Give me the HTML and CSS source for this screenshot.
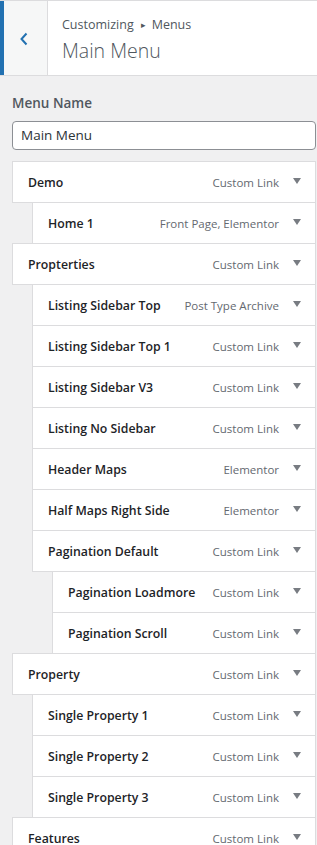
FILE: index.html
```html
<!DOCTYPE html>
<html>
<head>
<meta charset="utf-8">
<link rel="stylesheet" href="styles.css">
</head>
<body>
<div class="header">
  <div class="back"><svg width="10" height="14" viewBox="0 0 10 14"><path d="M7.5 1.5 L2.5 7 L7.5 12.5" fill="none" stroke="#2271b1" stroke-width="2"/></svg></div>
  <div class="titles">
    <div class="crumb">Customizing<span class="sep">▸</span>Menus</div>
    <div class="title">Main Menu</div>
  </div>
</div>
<div class="content">
  <div class="label">Menu Name</div>
  <div class="input">Main Menu</div>
  <ul class="menu">
    <li class="item"><span class="name">Demo</span><span class="type">Custom Link</span><span class="toggle"></span></li>
    <li class="item d1"><span class="name">Home 1</span><span class="type">Front Page, Elementor</span><span class="toggle"></span></li>
    <li class="item"><span class="name">Propterties</span><span class="type">Custom Link</span><span class="toggle"></span></li>
    <li class="item d1"><span class="name">Listing Sidebar Top</span><span class="type">Post Type Archive</span><span class="toggle"></span></li>
    <li class="item d1"><span class="name">Listing Sidebar Top 1</span><span class="type">Custom Link</span><span class="toggle"></span></li>
    <li class="item d1"><span class="name">Listing Sidebar V3</span><span class="type">Custom Link</span><span class="toggle"></span></li>
    <li class="item d1"><span class="name">Listing No Sidebar</span><span class="type">Custom Link</span><span class="toggle"></span></li>
    <li class="item d1"><span class="name">Header Maps</span><span class="type">Elementor</span><span class="toggle"></span></li>
    <li class="item d1"><span class="name">Half Maps Right Side</span><span class="type">Elementor</span><span class="toggle"></span></li>
    <li class="item d1"><span class="name">Pagination Default</span><span class="type">Custom Link</span><span class="toggle"></span></li>
    <li class="item d2"><span class="name">Pagination Loadmore</span><span class="type">Custom Link</span><span class="toggle"></span></li>
    <li class="item d2"><span class="name">Pagination Scroll</span><span class="type">Custom Link</span><span class="toggle"></span></li>
    <li class="item"><span class="name">Property</span><span class="type">Custom Link</span><span class="toggle"></span></li>
    <li class="item d1"><span class="name">Single Property 1</span><span class="type">Custom Link</span><span class="toggle"></span></li>
    <li class="item d1"><span class="name">Single Property 2</span><span class="type">Custom Link</span><span class="toggle"></span></li>
    <li class="item d1"><span class="name">Single Property 3</span><span class="type">Custom Link</span><span class="toggle"></span></li>
    <li class="item"><span class="name">Features</span><span class="type">Custom Link</span><span class="toggle"></span></li>
  </ul>
</div>
</body>
</html>
```
FILE: styles.css
```css
* { box-sizing: border-box; }
html, body { margin: 0; padding: 0; }
body {
  background: #f0f0f1;
  font-family: "Open Sans", "Noto Sans", sans-serif;
  color: #1d2327;
  width: 317px;
  height: 845px;
  overflow: hidden;
}
.header {
  display: flex;
  height: 76px;
  background: #fff;
  border-top: 1px solid #dcdcde;
  border-bottom: 1px solid #dcdcde;
}
.back {
  width: 48px;
  flex: none;
  background: #f6f7f7;
  border-left: 4px solid #2271b1;
  border-right: 1px solid #dcdcde;
  display: flex;
  align-items: center;
  justify-content: center;
  padding-right: 4px;
  padding-top: 2px;
}
.titles {
  padding: 14px 0 0 14px;
}
.crumb {
  font-size: 12.5px;
  color: #50575e;
  line-height: 20px;
}
.crumb .sep { font-size: 9px; position: relative; top: -1px; margin: 0 6px 0 7px; }
.title {
  font-size: 19.5px;
  font-weight: 300;
  color: #50575e;
  line-height: 26px;
  margin-top: 2px;
}
.content {
  padding: 17px 1px 0 12px;
}
.label {
  font-size: 13.5px;
  font-weight: 600;
  color: #50575e;
  line-height: 20px;
  margin-bottom: 8px;
}
.input {
  height: 29px;
  border: 1px solid #8c8f94;
  border-radius: 4px;
  background: #fff;
  font-size: 13.5px;
  line-height: 27px;
  padding: 0 8px;
  color: #2c3338;
}
.menu {
  list-style: none;
  margin: 11px 0 0;
  padding: 0;
}
.item {
  display: flex;
  align-items: center;
  height: 42px;
  margin-top: -1px;
  background: #fff;
  border: 1px solid #dcdcde;
  padding-left: 15px;
}
.item:first-child { margin-top: 0; }
.item.d1 { margin-left: 20px; }
.item.d2 { margin-left: 40px; }
.name {
  flex: 1;
  font-size: 12.3px;
  font-weight: 600;
  white-space: nowrap;
}
.type {
  font-size: 11.5px;
  color: #646970;
  white-space: nowrap;
}
.toggle {
  width: 36px;
  flex: none;
  display: flex;
  justify-content: center;
}
.toggle::before {
  content: "";
  border-left: 4px solid transparent;
  border-right: 4px solid transparent;
  border-top: 6px solid #787c82;
  margin-top: -2px;
}
```
